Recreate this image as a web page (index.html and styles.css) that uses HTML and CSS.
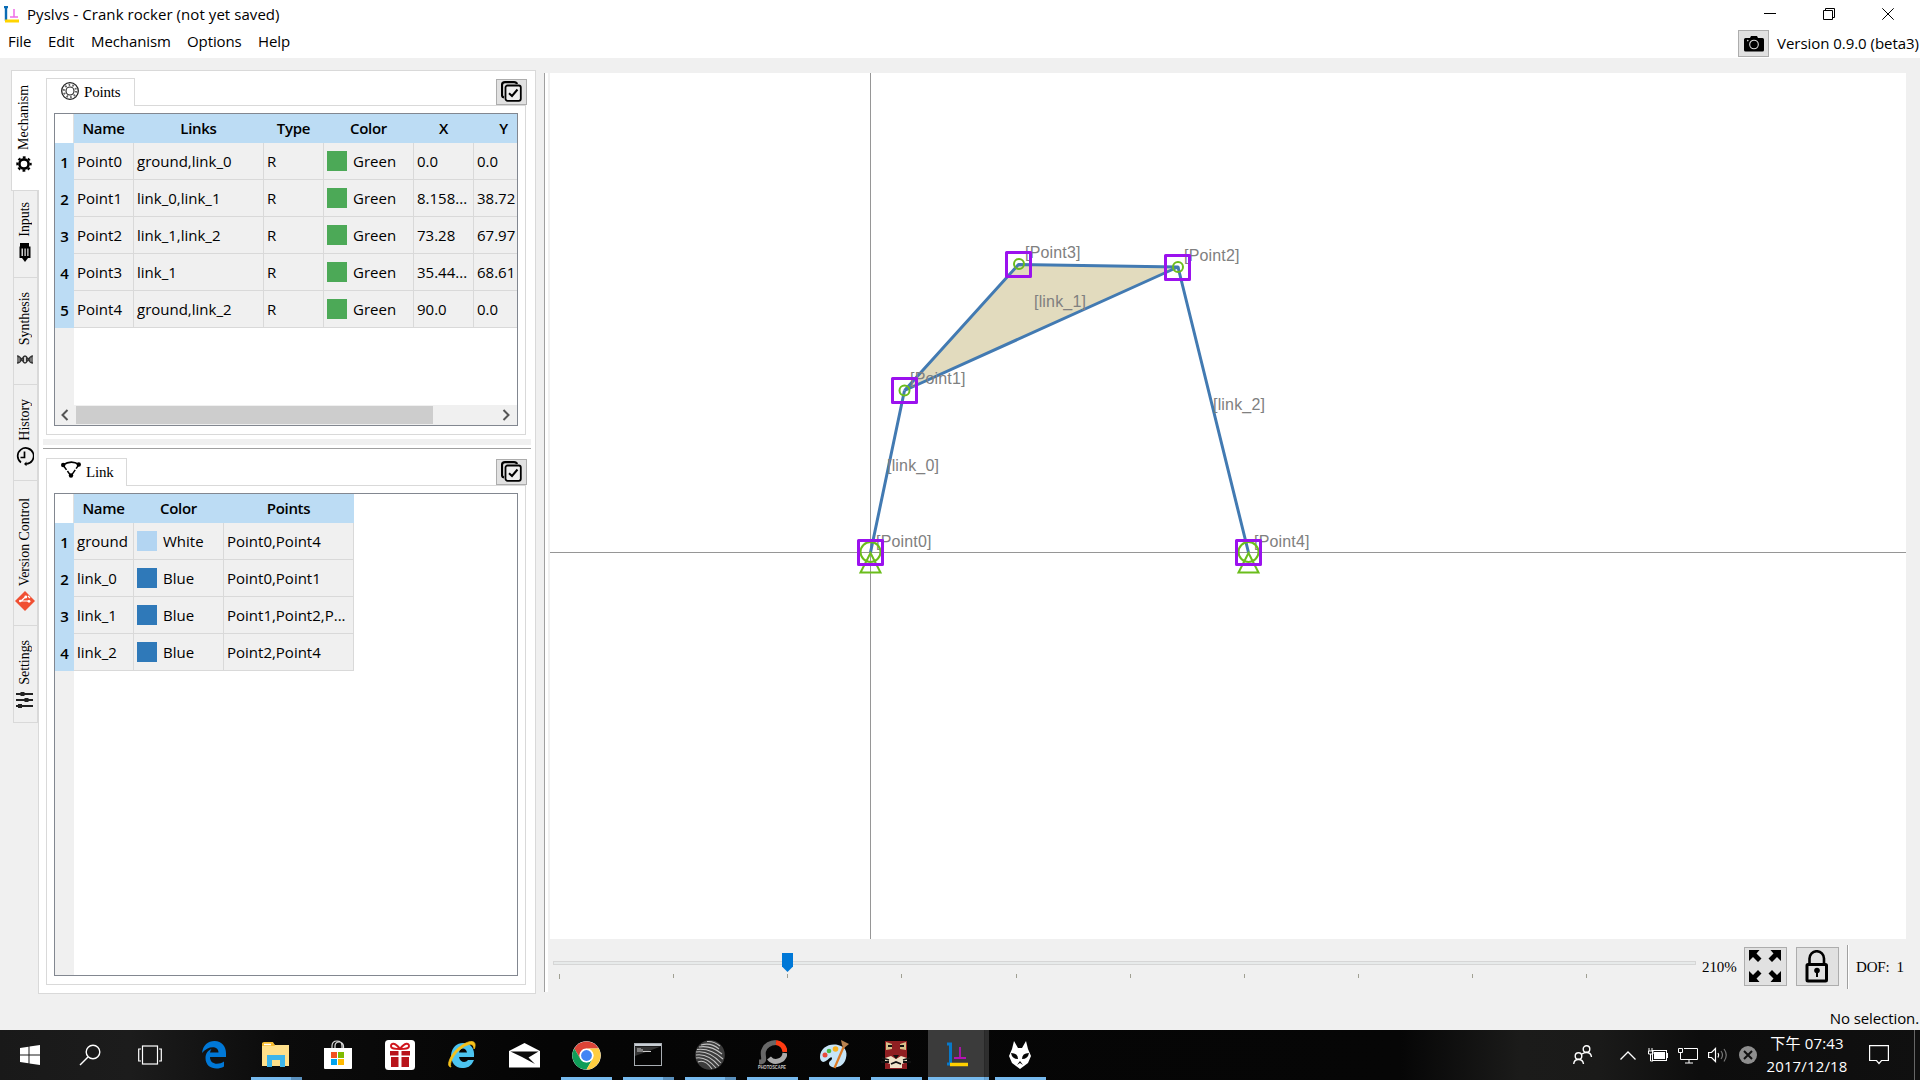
FILE: index.html
```html
<!DOCTYPE html>
<html lang="en">
<head>
<meta charset="utf-8">
<title>Pyslvs - Crank rocker (not yet saved)</title>
<link rel="stylesheet" href="styles.css">
</head>
<body>
<svg class="defs" aria-hidden="true">
  <symbol id="select" viewBox="0 0 21 21"><path d="M3 16.500Q1 16 1 14V4Q1 1.200 4 1.200H13Q15.500 1.200 16 3" fill="none" stroke="#000" stroke-width="2.200"/><rect x="4.500" y="4.500" width="15.300" height="15.300" rx="2" fill="#eee" stroke="#000" stroke-width="1.800"/><path d="M8 12.200L11 15L16.500 8.500" fill="none" stroke="#000" stroke-width="2"/></symbol>
</svg>
<header class="top">
  <div class="titlebar">
    <svg class="logo" width="16" height="17" viewBox="0 0 16 17"><path d="M2 0V15M0 1H4" stroke="#0a6cb5" stroke-width="2.400" fill="none"/><path d="M1 15H15" stroke="#ffd400" stroke-width="3"/><path d="M10 3V11M6 11H14" stroke="#f06ce8" stroke-width="1.500"/></svg>
    <h1>Pyslvs - Crank rocker (not yet saved)</h1>
    <div class="winbtns">
      <svg width="12" height="12"><path d="M0 5.500H12" stroke="#000"/></svg>
      <svg width="12" height="12" fill="none" stroke="#000"><path d="M.5 2.500H9.500V11.500H.5ZM2.500 2.500V.5H11.500V9.500H9.500"/></svg>
      <svg width="12" height="12" stroke="#000"><path d="M.3 .3L11.700 11.700M11.700 .3L.3 11.700"/></svg>
    </div>
  </div>
  <nav class="menubar">
    <span class="m-file">File</span><span class="m-edit">Edit</span><span class="m-mech">Mechanism</span><span class="m-opt">Options</span><span>Help</span>
    <button class="btn camera"><svg width="20" height="16" viewBox="0 0 20 16"><path d="M1.500 2H6L7 0H13L14 2H18.500Q20 2 20 3.500V14Q20 15.500 18.500 15.500H1.500Q0 15.500 0 14V3.500Q0 2 1.500 2Z"/><circle cx="10" cy="8.500" r="4.300" fill="none" stroke="#ddd" stroke-width="1.100"/><circle cx="3.800" cy="4.600" r=".8" fill="#ddd"/></svg></button>
    <span class="version">Version 0.9.0 (beta3)</span>
  </nav>
</header>
<main class="work">
  <div class="sidetabs">
    <div class="vtab active t-mech"><span>Mechanism</span><svg width="16" height="16" viewBox="0 0 16 16"><circle cx="8" cy="8" r="4.600" fill="none" stroke="#000" stroke-width="2.600"/><circle cx="8" cy="8" r="6.700" fill="none" stroke="#000" stroke-width="2" stroke-dasharray="2.800 2.462" stroke-dashoffset="1.400"/></svg></div>
    <div class="vtab t-inputs"><span>Inputs</span><svg width="12" height="19" viewBox="0 0 12 19"><path d="M1 0H10V5H1Z"/><path d="M1.500 4.500H10.500V14H1.500Z" fill="#ddd" stroke="#000" stroke-width="2"/><path d="M4.700 5V13M7.500 5V13" stroke="#000" stroke-width="1.500"/><path d="M3 15H9L6 19Z"/></svg></div>
    <div class="vtab t-syn"><span>Synthesis</span><svg width="16" height="9" viewBox="0 0 16 9" fill="none" stroke="#333" stroke-width="1.300"><path d="M0 1C5 1 5 8 8 8S11 1 16 1M0 8C5 8 5 1 8 1S11 8 16 8M1 1V8M3 2V7M6.500 2V7M9.500 2V7M13 2V7M15 1V8"/></svg></div>
    <div class="vtab t-hist"><span>History</span><svg width="18" height="19" viewBox="0 0 18 19" fill="none" stroke="#000" stroke-width="1.700"><path d="M5 15.500A8 8 0 1 1 10 17M8.500 4.500V10.500H4.500"/><path d="M10.500 14.500L8 17L10.500 19.200Z" fill="#000" stroke="none"/></svg></div>
    <div class="vtab t-git"><span>Version Control</span><svg width="20" height="20" viewBox="0 0 20 20"><path d="M10 0L20 10L10 20L0 10Z" fill="#f05033"/><path d="M5 10H14M6 10L11 5.500M13 5L15 7" stroke="#fff" stroke-width="1.200" fill="none"/><circle cx="14" cy="10.300" r="1.400" fill="#fff"/><circle cx="10.800" cy="6" r="1.400" fill="#fff"/><circle cx="5.300" cy="10" r="1.300" fill="#fff"/></svg></div>
    <div class="vtab t-set"><span>Settings</span><svg width="17" height="16" viewBox="0 0 17 16"><path d="M0 2H17M0 8H17M0 14H17" stroke="#222" stroke-width="1.900"/><path d="M6.500 0V4M10.500 6V10M4 12V16" stroke="#222" stroke-width="4"/></svg></div>
  </div>
  <section class="panel">
    <div class="dock dock-points">
      <div class="tabrow"><div class="tab tab-points"><svg width="18" height="18" viewBox="0 0 18 18" fill="none" stroke="#222"><circle cx="9" cy="9" r="8.300" stroke-width="1.300"/><circle cx="9" cy="9" r="4" stroke-width="1.100"/><circle cx="9" cy="9" r="6.100" stroke-width="2.200" stroke="#666" stroke-dasharray="1.600 2.200"/></svg>Points</div><button class="btn pick"><svg width="21" height="21"><use href="#select"/></svg></button></div>
      <div class="frame">
        <div class="grid">
          <table class="tbl points">
            <colgroup><col class="c-no"><col class="c-name"><col class="c-links"><col class="c-type"><col class="c-color"><col class="c-x"><col class="c-y"></colgroup>
            <thead><tr><th></th><th>Name</th><th>Links</th><th>Type</th><th>Color</th><th>X</th><th>Y</th></tr></thead>
            <tbody>
              <tr><th>1</th><td>Point0</td><td>ground,link_0</td><td>R</td><td><i class="sw green"></i>Green</td><td>0.0</td><td>0.0</td></tr>
              <tr><th>2</th><td>Point1</td><td>link_0,link_1</td><td>R</td><td><i class="sw green"></i>Green</td><td>8.158...</td><td>38.72</td></tr>
              <tr><th>3</th><td>Point2</td><td>link_1,link_2</td><td>R</td><td><i class="sw green"></i>Green</td><td>73.28</td><td>67.97</td></tr>
              <tr><th>4</th><td>Point3</td><td>link_1</td><td>R</td><td><i class="sw green"></i>Green</td><td>35.44...</td><td>68.61</td></tr>
              <tr><th>5</th><td>Point4</td><td>ground,link_2</td><td>R</td><td><i class="sw green"></i>Green</td><td>90.0</td><td>0.0</td></tr>
            </tbody>
          </table>
          <div class="rest"></div>
        </div>
        <div class="hscroll"><svg width="21" height="20"><path d="M12.500 5L7.500 10L12.500 15" fill="none" stroke="#555" stroke-width="2"/></svg><div class="thumb"></div><svg width="21" height="20"><path d="M7.500 5L12.500 10L7.500 15" fill="none" stroke="#555" stroke-width="2"/></svg></div>
      </div>
    </div>
    <div class="hsplit"></div>
    <div class="dock dock-link">
      <div class="tabrow"><div class="tab tab-link"><svg width="20" height="17" viewBox="0 0 20 17"><path d="M2 4Q10 -1.500 18 3.500" fill="none" stroke="#000" stroke-width="1.600"/><path d="M2 4L10 15L18 3.500" fill="none" stroke="#000" stroke-width="1.500" stroke-dasharray="6 1.500"/><circle cx="2.200" cy="4" r="2.200"/><circle cx="17.800" cy="3.500" r="2.200"/><circle cx="10" cy="14.500" r="2.200"/></svg>Link</div><button class="btn pick"><svg width="21" height="21"><use href="#select"/></svg></button></div>
      <div class="frame">
        <div class="grid">
          <table class="tbl links">
            <colgroup><col class="c-no"><col class="c-name"><col class="c-color"><col class="c-links"></colgroup>
            <thead><tr><th></th><th>Name</th><th>Color</th><th>Points</th></tr></thead>
            <tbody>
              <tr><th>1</th><td>ground</td><td><i class="sw white"></i>White</td><td>Point0,Point4</td></tr>
              <tr><th>2</th><td>link_0</td><td><i class="sw blue"></i>Blue</td><td>Point0,Point1</td></tr>
              <tr><th>3</th><td>link_1</td><td><i class="sw blue"></i>Blue</td><td>Point1,Point2,P...</td></tr>
              <tr><th>4</th><td>link_2</td><td><i class="sw blue"></i>Blue</td><td>Point2,Point4</td></tr>
            </tbody>
          </table>
          <div class="rest"></div>
        </div>
      </div>
    </div>
  </section>
  <div class="vsplit"></div>
  <section class="view">
    <svg class="canvas" width="1356" height="866" viewBox="550 73 1356 866">
      <path d="M870.500 73V939M550 552.500H1906" stroke="#969696"/>
      <path d="M904.500 390.500L1018.500 264.500L1178 267.500Z" fill="#e2dbbe"/>
      <g fill="none" stroke="#427ab2" stroke-width="3" stroke-linejoin="round">
        <path d="M904.500 390.500L1018.500 264.500L1178 267L904.500 390.500"/>
        <path d="M870.500 552.500L904.500 390.500M1178 267L1248.500 552.500"/>
      </g>
      <g class="label">
        <text x="887" y="470.500">[link_0]</text><text x="1034" y="306.500">[link_1]</text><text x="1213" y="409.500">[link_2]</text>
        <text x="876" y="546.500">[Point0]</text><text x="910" y="383.500">[Point1]</text><text x="1184" y="260.500">[Point2]</text><text x="1025" y="257.500">[Point3]</text><text x="1254" y="546.500">[Point4]</text>
      </g>
      <g fill="none" stroke="#6bbd1c" stroke-width="2">
        <circle cx="904.500" cy="390.500" r="5"/><circle cx="1019" cy="264" r="5"/><circle cx="1178" cy="267" r="5"/>
        <circle cx="870.500" cy="552" r="10"/><path d="M870.500 553L860.500 572.500H880.500Z"/>
        <circle cx="1248.500" cy="552" r="10"/><path d="M1248.500 553L1238.500 572.500H1258.500Z"/>
      </g>
      <g fill="none" stroke="#9b12ee" stroke-width="3" stroke-linejoin="round">
        <rect x="858.500" y="540.500" width="24" height="24"/><rect x="892.500" y="378.500" width="24" height="24"/><rect x="1006.500" y="252.500" width="24" height="24"/><rect x="1165.500" y="255.500" width="24" height="24"/><rect x="1236.500" y="540.500" width="24" height="24"/>
      </g>
    </svg>
    <div class="controls">
      <svg class="slider" width="1147" height="40" viewBox="550 945 1147 40">
        <rect x="553.500" y="961.500" width="1142" height="3" fill="#e7eaea" stroke="#d6d6d6"/>
        <path d="M559.500 974V979M673.500 974V978M787.500 974V978M901.500 974V978M1016.500 974V978M1130.500 974V978M1244.500 974V978M1358.500 974V978M1472.500 974V978M1586.500 974V978" stroke="#a0a093"/>
        <path d="M782 953H793V966.500L787.500 972L782 966.500Z" fill="#0078d7"/>
      </svg>
      <span class="zoomval">210%</span>
      <button class="btn big"><svg width="32" height="32" viewBox="0 0 32 32"><g id="ar"><path d="M0 0H10.500L7.500 3.500L12.500 8.500L9 12L4 7L0 11Z"/></g><use href="#ar" transform="matrix(-1 0 0 1 32 0)"/><use href="#ar" transform="matrix(1 0 0 -1 0 32)"/><use href="#ar" transform="matrix(-1 0 0 -1 32 32)"/></svg></button>
      <button class="btn big lock"><svg width="24" height="33" viewBox="0 0 24 33"><path d="M4.500 14V8.500A7.200 7.200 0 0 1 19 8.500V14" fill="none" stroke="#000" stroke-width="2.600"/><rect x="2" y="14.500" width="19.500" height="16.500" rx="1" fill="none" stroke="#000" stroke-width="3"/><circle cx="12" cy="20.500" r="2.800"/><path d="M12 21V27" stroke="#000" stroke-width="2"/></svg></button>
      <div class="sep"></div>
      <span class="dof">DOF:&nbsp; 1</span>
    </div>
  </section>
</main>
<footer class="status">No selection.</footer>
<div class="taskbar">
  <div class="sys"><svg width="20" height="20"><path d="M0 3L8.500 1.800V9.500H0ZM9.500 1.600L20 0V9.500H9.500ZM0 10.500H8.500V18.200L0 17ZM9.500 10.500H20V20L9.500 18.400Z" fill="#fff"/></svg></div>
  <div class="sys"><svg width="22" height="22" fill="none" stroke="#fff" stroke-width="1.400"><circle cx="14" cy="8" r="6.800"/><path d="M9 13L1 21"/></svg></div>
  <div class="sys"><svg width="24" height="20" fill="none" stroke="#fff" stroke-width="1.200"><rect x="4.500" y="1" width="15" height="18"/><path d="M3 4H.7V16H3M21 4H23.300V16H21"/></svg></div>
  <div class="apps">
    <div class="app"><svg width="24" height="28" viewBox="0 0 24 28"><path d="M0 12C1 4 6 0 12.500 0C20 0 24 6 24 12V16H8C8 24 17 24 22 20.500V25.500C14 30 3.500 27 3.500 17C3.500 12 6.500 9 9.500 8C8.500 9.500 8 11 8 11.500H16.500C16.500 4.500 6 4.500 0 12Z" fill="#0078d7"/></svg></div>
    <div class="app run multi"><svg width="28" height="26" viewBox="0 0 28 26"><path d="M0 2Q0 1 1 1H11L13 3H27V24H0Z" fill="#ffe08a"/><path d="M0 2Q0 0 2 0H11L13 4H0Z" fill="#f8bd2f"/><path d="M2 2.500H9" stroke="#fff" stroke-width="1.500"/><path d="M5 25V13H23V25H18V18H10V25Z" fill="#3db5ea"/></svg></div>
    <div class="app"><svg width="30" height="30" viewBox="1 0 30 30"><path d="M10 9V6Q10 1 15 1T20 6V9M13 9V6Q13 2 17 2T21.500 6V9" fill="none" stroke="#ddd" stroke-width="1.200"/><path d="M2 8H30V28Q30 29 29 29H3Q2 29 2 28Z" fill="#fff"/><path d="M9 12H15V18H9Z" fill="#f25022"/><path d="M16 12H22V18H16Z" fill="#7fba00"/><path d="M9 19H15V25H9Z" fill="#00a4ef"/><path d="M16 19H22V25H16Z" fill="#ffb900"/></svg></div>
    <div class="app"><svg width="30" height="30" viewBox="0 0 30 30"><rect width="30" height="30" rx="3.500" fill="#fff"/><g fill="none" stroke="#d0151c" stroke-width="1.900"><path d="M15 9C10 2 6 3 6 6S10 9 15 9C20 2 24 3 24 6S20 9 15 9"/></g><path d="M5 11H13.500V15.500H5ZM16.500 11H25V15.500H16.500ZM6 17H13.500V27H6ZM16.500 17H24V27H16.500Z" fill="#b8131a"/></svg></div>
    <div class="app"><svg width="30" height="30" viewBox="0 0 30 30"><path d="M4 15C5 7 10 3 16 3C24 3 28 9 27 17H12C13 23 19 23 21 20H27C24 27 20 28 15 28C8 28 4 22 4 15ZM12 12.500H20C19 7 13 7 12 12.500Z" fill="#4cc4f0"/><path d="M4 27C-2 27 4 12 14 6C22 0 29 0 28 6C28 8 27 9 27 9C27 3 22 3 15 8C6 14 2 24 4 27Z" fill="#f7c21b" stroke="#f7c21b" stroke-width=".8"/></svg></div>
    <div class="app"><svg width="31" height="25" viewBox="0 0 31 25"><path d="M0 8L15.500 0L31 8V24.500H0Z" fill="#fff"/><path d="M1.500 8.500H29.500L19.500 14.500L26 21L13 14Z" fill="#0a0a0a"/></svg></div>
    <div class="app run"><svg width="29" height="29" viewBox="-14.500 -14.500 29 29"><circle r="14.300" fill="#fff"/><path d="M-12.200 -7.100A14.100 14.100 0 0 1 12.200 -7H0A7 7 0 0 0 -6.100 3.500Z" fill="#db4437"/><path d="M-12.200 -7.100A14.100 14.100 0 0 0 0 14.100L6.100 3.500A7 7 0 0 1 -6.100 3.500Z" fill="#0f9d58"/><path d="M12.200 -7A14.100 14.100 0 0 1 0 14.100L6.100 3.500A7 7 0 0 0 0 -7Z" fill="#ffcd40"/><circle r="6.800" fill="#fff"/><circle r="5.400" fill="#4285f4"/></svg></div>
    <div class="app run multi"><svg width="28" height="24" viewBox="0 0 28 24"><rect x=".5" y=".5" width="27" height="22" fill="#050505" stroke="#a8adb2"/><path d="M1 2H27" stroke="#c8ced4" stroke-width="2"/><path d="M1 3.500H27L1 13Z" fill="#333"/><path d="M4 5V9M6 5V9M8 6V9M9 8.500H17" stroke="#ccc"/></svg></div>
    <div class="app run multi"><svg width="30" height="30" viewBox="0 0 30 30"><circle cx="15" cy="15" r="14.800" fill="#3c3c3c"/><path d="M6 5Q16 2 24 9M4 7Q16 5 27 14M2 9.500Q16 8 28 19M1 12Q14 10 26 23M1 15Q13 13 24 26M1 18Q11 16 21 28M3 22Q10 19 17 29M12 1.500Q19 1 25 6" fill="none" stroke="#c4c4c4" stroke-width="1.100"/></svg></div>
    <div class="app run"><svg width="30" height="31" viewBox="0 0 30 31"><g fill="none" stroke-width="5"><path d="M2 22C10 22 5 16 6.500 11Q9 3 19 2.500" stroke="#686868"/><path d="M19 2.500A10 10 0 0 1 28 12" stroke="#ff3b12"/><path d="M28 13A9 9 0 0 1 12 18" stroke="#aaa"/></g><text x="1" y="29" textLength="28" lengthAdjust="spacingAndGlyphs" class="photoscape">PHOTOSCAPE</text></svg></div>
    <div class="app run"><svg width="30" height="30" viewBox="0 0 30 30"><path d="M1 17C1 8 10 3 19 5C28 7 29 14 26 21C22 29 11 29 10 24C10 20 13 21 13 18C12 15 8 22 4 22Q1 21 1 17Z" fill="#c6e4f7"/><circle cx="6" cy="15" r="2.500" fill="#e84a3c"/><circle cx="10" cy="11" r="2.300" fill="#4cb944"/><circle cx="16.500" cy="9" r="2.800" fill="#f8b020"/><path d="M25 6L15.500 28" stroke="#dd7b26" stroke-width="2.200"/><path d="M22 0L30 4L25 8L23 5Z" fill="#b98350"/></svg></div>
    <div class="app run"><svg width="30" height="28" viewBox="0 0 30 28"><path d="M4 0H26V28H4Z" fill="#8f1f22"/><path d="M5 1L11 3V8L5 9ZM25 1L19 3V8L25 9Z" fill="#d8c08a"/><path d="M4 17L10 15L15 18L20 15L26 17V21L21 23V27H9V23L4 21Z" fill="#eee3c8"/><path d="M12 14H18L15 18Z" fill="#111"/><path d="M7 5H11M19 5H23M0 21H8M22 21H30M1 17L8 19M22 19L29 17M10 23L15 21L20 23" stroke="#111" stroke-width="1.800" fill="none"/></svg></div>
    <div class="app run active"><svg width="22" height="26" viewBox="0 0 22 26"><path d="M3.500 1V22M0 2H5M0 22H4" stroke="#0879c9" stroke-width="3"/><path d="M3 22.500H21" stroke="#ffd000" stroke-width="3.500"/><path d="M13 5V15M7 16H19" stroke="#b413b4" stroke-width="1.800"/></svg></div>
    <div class="app run"><svg width="22" height="28" viewBox="0 0 22 28"><path d="M5 0L9 7H13L17 0L19 8L22 15L19 22L11 28L3 22L0 15L3 8Z" fill="#fff"/><path d="M2 12Q9 12 9 18Q3 18 2 12ZM20 12Q13 12 13 18Q19 18 20 12ZM8 24L11 20L14 24L11 22Z" fill="#050505"/></svg></div>
  </div>
  <div class="tray">
    <div class="people"><svg width="20" height="20" fill="none" stroke="#fff" stroke-width="1.400"><circle cx="13.500" cy="4" r="3.300"/><circle cx="5.500" cy="11" r="3.300"/><path d="M.7 19Q1 14.500 5.500 14.500T10.500 19M9 9Q11 7.500 13.500 7.500Q18 7.500 18.500 12"/></svg></div>
    <div class="ic"><svg width="16" height="9"><path d="M.5 8.500L8 1L15.500 8.500" fill="none" stroke="#fff" stroke-width="1.300"/></svg></div>
    <div class="ic"><svg width="20" height="14" fill="none" stroke="#fff"><rect x="4.500" y="2.500" width="14" height="10"/><path d="M6 4H17V11H6Z" fill="#fff" stroke="none"/><path d="M19.500 5V10M1 0V3M4 0V3"/><path d="M.5 3H5V6H.5ZM2.500 6V13H5" /></svg></div>
    <div class="ic"><svg width="20" height="17" fill="none" stroke="#fff"><path d="M6 1.500H19.500V12.500H2.500V7M11 13V16M7 16H15"/><path d="M.5 1.500H4.500V5.500H.5ZM2.500 5.500V7"/></svg></div>
    <div class="ic"><svg width="20" height="16" fill="none" stroke="#fff" stroke-width="1.200"><path d="M.6 5.500H3.500L7.500 1.500V14.500L3.500 10.500H.6Z"/><path d="M10 6Q11.500 8 10 10.500"/><path d="M13 4Q16 8 13 12M16 2Q20.500 8 16 14.500" stroke="#777"/></svg></div>
    <div class="ic"><svg width="18" height="18"><circle cx="9" cy="9" r="9" fill="#8e8e8e"/><path d="M5 5L13 13M13 5L5 13" stroke="#111" stroke-width="2"/></svg></div>
    <div class="clock"><span>下午 07:43</span><span>2017/12/18</span></div>
    <div class="note"><svg width="20" height="20" fill="none" stroke="#fff" stroke-width="1.200"><path d="M.6 .6H19.400V15.500H12.500L10 18.500L7.500 15.500H.6Z"/></svg></div>
    <div class="peek"></div>
  </div>
</div>
</body>
</html>
```
FILE: styles.css
```css
* { box-sizing: border-box; }
body { margin: 0; width: 1920px; height: 1080px; overflow: hidden; display: flex; flex-direction: column; background: #f0f0f0; color: #000; font: 15px/20px "Open Sans", "Noto Sans CJK TC", sans-serif; letter-spacing: -.1px; }
svg { display: block; flex: none; }
.defs { width: 0; height: 0; position: absolute; }
.btn { display: flex; align-items: center; justify-content: center; padding: 0; margin: 0; background: #e1e1e1; border: 1px solid #adadad; flex: none; }

.top { height: 58px; background: #fff; flex: none; }
.titlebar { height: 28px; display: flex; align-items: center; padding-left: 4px; }
.titlebar h1 { margin: 0 0 0 7px; font-size: 15px; font-weight: 400; letter-spacing: .06px; }
.winbtns { display: flex; gap: 47px; margin-left: auto; padding-right: 26px; }
.menubar { height: 30px; padding: 0 1px 0 8px; display: flex; align-items: flex-start; line-height: 26px; }
.menubar span { letter-spacing: -.1px; }
.menubar .m-file { width: 40px; }
.menubar .m-edit { width: 43px; }
.menubar .m-mech { width: 96px; }
.menubar .m-opt { width: 71px; }
.camera { width: 31px; height: 27px; margin: 2px 8px 0 auto; }
.menubar .version { width: 142px; white-space: nowrap; padding-top: 2px; letter-spacing: -.04px; }

.work { display: flex; height: 954px; padding: 12px 14px 0 11px; flex: none; }
.sidetabs { width: 28px; margin-right: -1px; display: flex; flex-direction: column; z-index: 1; }
.vtab { margin-left: 2px; width: 25px; border: 1px solid #d9d9d9; border-top: 0; display: flex; flex-direction: column; align-items: center; justify-content: flex-end; flex: none; padding: 0 2px 20px 0; gap: 6px; font: 14px/16px "Liberation Serif", serif; letter-spacing: -.05px; }
.vtab span { writing-mode: vertical-rl; transform: rotate(180deg); white-space: nowrap; }
.vtab.active { margin-left: 0; width: 28px; background: #fff; border-top: 1px solid #d9d9d9; border-right: 0; padding-right: 3px; }
.vtab.t-mech { height: 121px; padding-bottom: 18px; }
.vtab.t-inputs { height: 87px; padding-bottom: 15px; }
.vtab.t-syn { height: 107px; gap: 10px; }
.vtab.t-hist { height: 96px; padding-bottom: 14px; }
.vtab.t-git { height: 145px; padding-bottom: 14px; gap: 5px; }
.vtab.t-set { height: 97px; padding-bottom: 14px; gap: 7px; }

.panel { width: 498px; height: 924px; border: 1px solid #d9d9d9; background: #fff; padding: 7px 4px 0; flex: none; }
.dock { margin: 0 5px 0 3px; display: flex; flex-direction: column; background: linear-gradient(#d9d9d9, #d9d9d9) 0 27px / 100% 1px no-repeat, linear-gradient(#d9d9d9, #d9d9d9) 0 27px / 1px 100% no-repeat, linear-gradient(#d9d9d9, #d9d9d9) 100% 27px / 1px 100% no-repeat, linear-gradient(#d9d9d9, #d9d9d9) 0 100% / 100% 1px no-repeat; }
.dock-points { height: 357px; }
.dock-link { height: 527px; margin-top: 9px; }
.tabrow { height: 28px; display: flex; justify-content: space-between; margin-bottom: -1px; flex: none; position: relative; z-index: 1; }
.tab { border: 1px solid #d9d9d9; border-bottom: 0; background: #fff; padding: 0 0 2px 14px; display: flex; align-items: center; gap: 5px; font: 15px/20px "Liberation Serif", serif; letter-spacing: -.2px; }
.tab-points { width: 89px; }
.tab-link { width: 81px; }
.tab svg { margin-top: -2px; }
.tab-link svg { margin-top: -4px; }
.pick { width: 31px; height: 26px; margin: 1px -1px 0 0; }
.pick svg { margin: 0 1px 1px 0; }
.frame { flex: 1; display: flex; flex-direction: column; overflow: hidden; border: 1px solid #828790; margin: 8px 8px 9px; }
.grid { flex: 1; display: flex; flex-direction: column; overflow: hidden; }
.rest { flex: 1; width: 19px; background: #f0f0f0; }
.tbl { border-collapse: separate; border-spacing: 0; table-layout: fixed; flex: none; }
.points { width: 479px; }
.links { width: 299px; }
.c-no { width: 19px; }
.c-name { width: 60px; }
.c-links { width: 130px; }
.c-type { width: 60px; }
.c-color { width: 90px; }
.c-x, .c-y { width: 60px; }
.tbl th, .tbl td { padding: 0; height: 37px; white-space: nowrap; }
.tbl th { background: #bcdcf4; font-weight: 600; letter-spacing: -.3px; }
.tbl thead th { height: 29px; padding: 0 1px 2px 0; }
.tbl thead th:first-child { background: #fff; border-right: 1px solid #e0e0e0; }
.tbl td { background: #f0f0f0; border-right: 1px solid #d9d9d9; border-bottom: 1px solid #d9d9d9; padding-left: 3px; letter-spacing: 0; overflow: hidden; }
.sw { display: inline-block; width: 20px; height: 20px; vertical-align: middle; margin: -2px 6px 0 0; }
.green { background: #4ca957; }
.blue { background: #2f79b9; }
.white { background: #b3d5f2; }
.hscroll { height: 20px; background: #f0f0f0; display: flex; }
.thumb { width: 357px; background: #cdcdcd; margin-right: auto; border-top: 1px solid #f0f0f0; border-bottom: 1px solid #f0f0f0; }
.hsplit { height: 10px; margin-top: 4px; background: linear-gradient(#f0f0f0 6px, #fff 6px, #fff 9px, #a0a0a0 9px); }

.vsplit { width: 4px; height: 919px; margin: 3px 2px 0 8px; border-left: 1px solid #a0a0a0; background: #fff; flex: none; }
.view { width: 1356px; margin-top: 3px; flex: none; }
.canvas { background: #fff; }
.label { font: 16px "Liberation Sans", Arial, sans-serif; fill: #808080; letter-spacing: .18px; }
.controls { display: flex; padding-top: 6px; font: 15px/44px "Liberation Serif", serif; }
.zoomval { width: 47px; padding-left: 5px; letter-spacing: -.1px; }
.big { width: 43px; height: 39px; margin: 2px 9px 0 0; }
.big svg { margin: 0 1px 1px 0; }
.lock { margin-right: 8px; }
.sep { width: 2px; height: 44px; border-left: 1px solid #a0a0a0; background: #fff; }
.dof { padding-left: 7px; white-space: nowrap; letter-spacing: -.2px; }

.status { height: 18px; text-align: right; line-height: 12px; padding-right: 1px; flex: none; letter-spacing: -.1px; }

.taskbar { height: 50px; display: flex; color: #fff; flex: none; background: linear-gradient(90deg, #191919, #1c1c1c 130px, #0b0b0b 280px, #050505 550px, #060606 1400px, #1b1b1a 1520px, #1a1a19 1600px, #0d0d0d 1700px, #101010); }
.sys { width: 60px; display: flex; align-items: center; justify-content: center; }
.apps { display: flex; margin-left: 3px; }
.app { width: 62px; height: 50px; position: relative; display: flex; align-items: center; justify-content: center; }
.app.run::after { content: ""; position: absolute; left: 6px; bottom: 0; width: 51px; height: 3px; background: #76b9ed; }
.app.multi::after { background: linear-gradient(90deg, #76b9ed 40px, #5a90bd 40px); }
.app.active::before { content: ""; position: absolute; inset: 0 0 0 1px; background: linear-gradient(90deg, #3b3b3b 56px, #222 56px, #2e2e2e 57px); }
.app.active::after { left: 1px; width: 61px; background: linear-gradient(90deg, #76b9ed 56px, #5a90bd 56px, #6aa6d6 57px); }
.app.active svg { position: relative; }
.photoscape { font: bold 5.5px "Liberation Sans", sans-serif; fill: #c8c8c8; letter-spacing: 0; }
.tray { display: flex; margin-left: auto; align-items: center; }
.tray > div { display: flex; justify-content: center; align-items: center; }
.people { width: 60px; }
.ic { width: 30px; }
.tray .clock { width: 88px; flex-direction: column; line-height: 23px; padding-bottom: 1px; letter-spacing: .15px; }
.note { width: 56px; }
.peek { width: 7px; height: 50px; margin-left: 7px; border-left: 1px solid #666; margin-right: -1px; }
```
